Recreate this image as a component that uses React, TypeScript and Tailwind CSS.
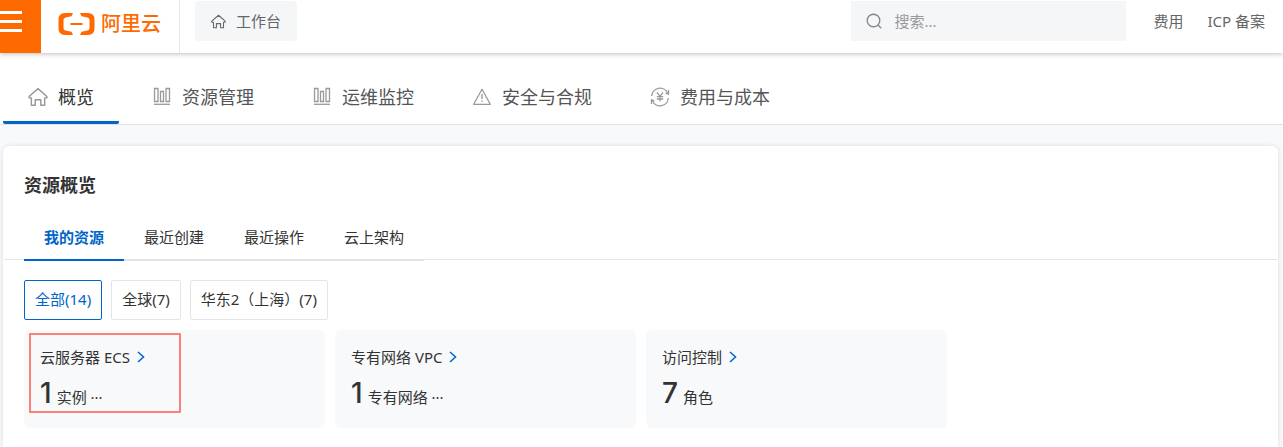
import { useState, type ReactNode } from "react";

type NavItem = {
  label: string;
  icon: ReactNode;
};

type Resource = {
  name: string;
  count: number;
  unit: string;
  more: boolean;
  marked?: boolean;
};

const navItems: NavItem[] = [
  { label: "概览", icon: <HomeIcon className="size-5" /> },
  { label: "资源管理", icon: <BarsIcon /> },
  { label: "运维监控", icon: <BarsIcon /> },
  { label: "安全与合规", icon: <WarningIcon /> },
  { label: "费用与成本", icon: <CostIcon /> }
];

const tabs = ["我的资源", "最近创建", "最近操作", "云上架构"];

const filters = ["全部(14)", "全球(7)", "华东2（上海）(7)"];

const resources: Resource[] = [
  { name: "云服务器 ECS", count: 1, unit: "实例", more: true, marked: true },
  { name: "专有网络 VPC", count: 1, unit: "专有网络", more: true },
  { name: "访问控制", count: 7, unit: "角色", more: false }
];

export default function App() {
  const [nav, setNav] = useState(navItems[0].label);
  const [tab, setTab] = useState(tabs[0]);
  const [filter, setFilter] = useState(filters[0]);

  return (
    <div className="flex min-h-screen flex-col bg-[#f7f9fb] font-['Noto_Sans','Noto_Sans_CJK_SC',sans-serif] text-[15px] leading-5 text-[#333]">
      <header className="relative z-10 flex h-[53px] items-start bg-white shadow-[0_1px_5px_rgba(0,0,0,0.25)]">
        <button aria-label="菜单" className="flex h-full w-[41px] flex-col gap-[6px] bg-[#ff6a00] pt-[11px]">
          <span className="h-[3px] w-[22px] bg-white" />
          <span className="h-[3px] w-[22px] bg-white" />
          <span className="h-[3px] w-[22px] bg-white" />
        </button>
        <a href="#" className="flex h-full w-[139px] items-start gap-[6px] border-r border-[#e6e6e6] pt-3 pl-[17px] text-[#ff6a00]">
          <LogoIcon />
          <span className="text-[20px] leading-6 font-medium">阿里云</span>
        </a>
        <a href="#" className="mt-px ml-[15px] flex h-10 items-center gap-[10px] rounded-[3px] bg-[#f4f6f8] px-4 text-[#666]">
          <HomeIcon className="size-[15px]" />
          工作台
        </a>
        <label className="mt-px ml-auto flex h-10 w-[275px] items-center gap-3 bg-[#f4f6f8] px-[15px]">
          <SearchIcon />
          <input
            aria-label="搜索"
            className="min-w-0 flex-1 bg-transparent outline-none placeholder:text-[#999]"
            placeholder="搜索..."
          />
        </label>
        <nav className="mt-px flex h-10 items-center gap-6 pr-[18px] pl-[27px] text-[#666]">
          <a href="#">费用</a>
          <a href="#">ICP 备案</a>
        </nav>
      </header>

      <nav className="flex gap-2 border-b border-[#dfe1e4] bg-white pl-[3px]">
        {navItems.map((item) => (
          <button
            key={item.label}
            onClick={() => setNav(item.label)}
            className={`flex h-[71px] items-center gap-[10px] border-b-[3px] px-[25px] pt-[19px] text-lg ${
              nav === item.label ? "rounded-b-xs border-[#0064c8] text-[#333]" : "border-transparent text-[#555]"
            }`}
          >
            <span className="text-[#999]">{item.icon}</span>
            {item.label}
          </button>
        ))}
      </nav>

      <main className="mt-[21px] mr-[5px] ml-[3px] flex-1 rounded-t-md bg-white pb-5 shadow-[0_0_5px_rgba(30,50,80,0.13)]">
        <h1 className="px-[21px] pt-[25px] text-lg font-bold">资源概览</h1>

        <div className="mx-px mt-4 flex h-[45px] border-b border-[#e3e4e6] px-5">
          {tabs.map((name) => (
            <button
              key={name}
              onClick={() => setTab(name)}
              className={`h-[46px] w-[100px] shrink-0 border-b-2 ${
                tab === name ? "border-[#0064c8] font-bold text-[#0064c8]" : "border-[#e3e4e6]"
              }`}
            >
              {name}
            </button>
          ))}
        </div>

        <div className="mt-5 flex flex-wrap gap-[9px] px-[21px]">
          {filters.map((name) => (
            <button
              key={name}
              onClick={() => setFilter(name)}
              className={`h-10 rounded-xs border px-[10px] pb-[3px] ${
                filter === name ? "border-[#0064c8] text-[#0064c8]" : "border-[#e3e4e6]"
              }`}
            >
              {name}
            </button>
          ))}
        </div>

        <div className="mt-[10px] flex flex-wrap gap-[10px] px-[21px]">
          {resources.map((resource) => (
            <ResourceCard key={resource.name} resource={resource} />
          ))}
        </div>
      </main>
    </div>
  );
}

function ResourceCard({ resource }: { resource: Resource }) {
  return (
    <section className="relative h-[98px] w-[301px] rounded-md bg-[#f7f9fb] px-4 pt-[17px]">
      <a href="#" className="flex items-center gap-[7px]">
        {resource.name}
        <ChevronIcon />
      </a>
      <p className="mt-[10px] flex items-baseline gap-[5px]">
        <span className="font-['Inter',sans-serif] text-[28px] leading-8 font-medium">{resource.count}</span>
        <span>
          {resource.unit}
          {resource.more ? " ···" : ""}
        </span>
      </p>
      {resource.marked ? (
        <div className="pointer-events-none absolute top-[3px] left-[5px] h-20 w-[152px] rounded-[1px] border-2 border-[#fa8078]" />
      ) : null}
    </section>
  );
}

function LogoIcon() {
  return (
    <svg width="37" height="24" viewBox="0 0 37 24" fill="currentColor" aria-hidden="true">
      <path d="M15 1H7Q.5 1 .5 7.500v9Q.5 23 7 23h8l-1.500-3.200-6-1.300Q5.500 18 5.500 16V8q0-2 2-2.500l6-1.300z" />
      <path d="M22 1h8q6.500 0 6.500 6.500v9Q36.500 23 30 23h-8l1.500-3.200 6-1.300q2-.5 2-2.500V8q0-2-2-2.500l-6-1.300z" />
      <path d="M12.500 11h12v2h-12z" />
    </svg>
  );
}

function HomeIcon({ className }: { className: string }) {
  return (
    <svg className={className} viewBox="0 0 18 18" fill="none" stroke="currentColor" strokeWidth="1.300" aria-hidden="true">
      <path d="M3 9.800H1v-1.300L9 1.500l8 7v1.300h-2v6.700h-3.500v-5h-5v5H3z" strokeLinejoin="round" />
    </svg>
  );
}

function BarsIcon() {
  return (
    <svg className="size-5" viewBox="0 0 20 20" fill="none" stroke="currentColor" strokeWidth="1.300" aria-hidden="true">
      <path d="M2.500 1.500h3.500v13h-3.500zM8.500 4.500h3v10h-3zM14 1.500h3.500v13h-3.500z" />
      <path d="M2 17.300h16" />
    </svg>
  );
}

function WarningIcon() {
  return (
    <svg className="size-5" viewBox="0 0 20 20" fill="none" stroke="currentColor" aria-hidden="true">
      <path d="M10 2.300 18.300 17.300H1.700z" strokeWidth="1.300" strokeLinejoin="round" />
      <path d="M10 7v5M10 13.200v1.600" strokeWidth="1.400" />
    </svg>
  );
}

function CostIcon() {
  return (
    <svg className="size-5" viewBox="0 0 20 20" fill="none" stroke="currentColor" strokeWidth="1.300" aria-hidden="true">
      <path d="M1.700 9A8.300 8.300 0 0 1 17.500 6M18.300 11A8.300 8.300 0 0 1 2.500 14" />
      <path d="M18.500 3v4.200l-3-1.200M1.500 17v-4.200l3 1.200" />
      <path d="M7 5.500 10 9.300 13 5.500M10 9.300v5.200M6.800 9.700h6.400M6.800 12h6.400" />
    </svg>
  );
}

function SearchIcon() {
  return (
    <svg className="size-4" viewBox="0 0 16 16" fill="none" stroke="#888" strokeWidth="1.400" aria-hidden="true">
      <circle cx="7.500" cy="7.500" r="6.300" />
      <path d="m12 12 3.200 3.200" />
    </svg>
  );
}

function ChevronIcon() {
  return (
    <svg width="8" height="12" viewBox="0 0 8 12" fill="none" stroke="#0064c8" strokeWidth="1.500" aria-hidden="true">
      <path d="m1 1 5.500 5L1 11" />
    </svg>
  );
}
